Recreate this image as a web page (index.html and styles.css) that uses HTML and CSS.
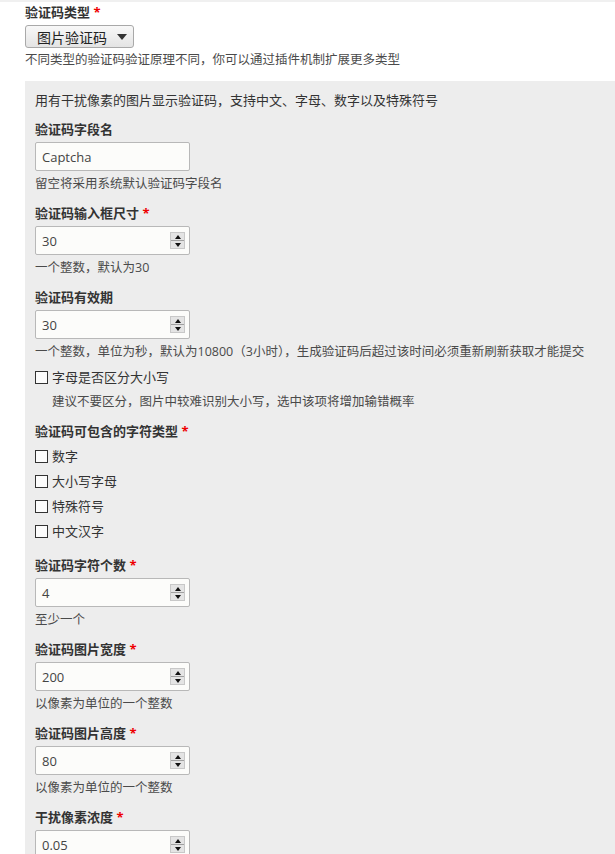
FILE: index.html
```html
<!DOCTYPE html>
<html lang="zh-CN">
<head>
  <meta charset="UTF-8">
  <meta name="viewport" content="width=device-width, initial-scale=1">
  <title>验证码设置</title>
  <link rel="stylesheet" href="styles.css">
</head>
<body>

<div class="page">
  <!-- Captcha type -->
  <div class="top-field">
    <label class="field-label">验证码类型 <span class="req">*</span></label>
    <div class="select">图片验证码<span class="caret"></span></div>
    <div class="help">不同类型的验证码验证原理不同，你可以通过插件机制扩展更多类型</div>
  </div>

  <!-- Image captcha settings -->
  <div class="panel">
    <p class="intro">用有干扰像素的图片显示验证码，支持中文、字母、数字以及特殊符号</p>

    <div class="field">
      <label class="field-label">验证码字段名</label>
      <div class="input"><span class="value">Captcha</span></div>
      <div class="help">留空将采用系统默认验证码字段名</div>
    </div>

    <div class="field">
      <label class="field-label">验证码输入框尺寸 <span class="req">*</span></label>
      <div class="input"><span class="value">30</span><span class="spin"><i class="up"></i><i class="down"></i></span></div>
      <div class="help">一个整数，默认为30</div>
    </div>

    <div class="field">
      <label class="field-label">验证码有效期</label>
      <div class="input"><span class="value">30</span><span class="spin"><i class="up"></i><i class="down"></i></span></div>
      <div class="help">一个整数，单位为秒，默认为10800（3小时），生成验证码后超过该时间必须重新刷新获取才能提交</div>
    </div>

    <div class="check-single">
      <label class="option"><span class="box"></span>字母是否区分大小写</label>
      <div class="help indent">建议不要区分，图片中较难识别大小写，选中该项将增加输错概率</div>
    </div>

    <div class="field">
      <label class="field-label">验证码可包含的字符类型 <span class="req">*</span></label>
      <div class="options">
        <label class="option"><span class="box"></span>数字</label>
        <label class="option"><span class="box"></span>大小写字母</label>
        <label class="option"><span class="box"></span>特殊符号</label>
        <label class="option"><span class="box"></span>中文汉字</label>
      </div>
    </div>

    <div class="field after-group">
      <label class="field-label">验证码字符个数 <span class="req">*</span></label>
      <div class="input"><span class="value">4</span><span class="spin"><i class="up"></i><i class="down"></i></span></div>
      <div class="help">至少一个</div>
    </div>

    <div class="field">
      <label class="field-label">验证码图片宽度 <span class="req">*</span></label>
      <div class="input"><span class="value">200</span><span class="spin"><i class="up"></i><i class="down"></i></span></div>
      <div class="help">以像素为单位的一个整数</div>
    </div>

    <div class="field">
      <label class="field-label">验证码图片高度 <span class="req">*</span></label>
      <div class="input"><span class="value">80</span><span class="spin"><i class="up"></i><i class="down"></i></span></div>
      <div class="help">以像素为单位的一个整数</div>
    </div>

    <div class="field">
      <label class="field-label">干扰像素浓度 <span class="req">*</span></label>
      <div class="input"><span class="value">0.05</span><span class="spin"><i class="up"></i><i class="down"></i></span></div>
    </div>
  </div>
</div>

</body>
</html>
```

FILE: styles.css
```css
body {
  margin: 0;
  border-top: 2px solid #f0f0f0;
  background-color: #fff;
  font-family: "Open Sans", "Noto Sans CJK SC", sans-serif;
  font-size: 13px;
  color: #333;
}

.page {
  padding: 1px 0 0 25px;
}

.field-label {
  display: block;
  font-weight: bold;
  line-height: 18px;
  margin-bottom: 4px;
  color: #333;
}

.req {
  color: #e00;
}

.help {
  line-height: 18px;
  margin-top: 4px;
  color: #4a4a4a;
  font-size: 12.5px;
}

/* select */
.select {
  display: flex;
  align-items: center;
  justify-content: space-between;
  box-sizing: border-box;
  width: 109px;
  height: 23px;
  padding: 0 6px 0 11px;
  border: 1px solid #a9a9a9;
  border-radius: 3px;
  background: linear-gradient(#f8f8f8, #e4e4e4);
  font-size: 14px;
  color: #222;
}

.caret {
  width: 0;
  height: 0;
  border-left: 5px solid transparent;
  border-right: 5px solid transparent;
  border-top: 6px solid #333;
}

.top-field .help {
  margin-top: 3px;
}

/* gray panel */
.panel {
  margin-top: 12px;
  padding: 10px 10px 20px;
  background-color: #ededed;
}

.intro {
  margin: 0;
  line-height: 18px;
}

.field {
  margin-top: 11px;
}

.field.after-group {
  margin-top: 16px;
}

/* inputs */
.input {
  display: flex;
  align-items: center;
  justify-content: space-between;
  box-sizing: border-box;
  width: 155px;
  height: 29px;
  padding: 0 4px 0 6px;
  border: 1px solid #b8b8b8;
  border-radius: 2px;
  background-color: #fcfcfa;
  color: #444;
}

.spin {
  display: flex;
  flex-direction: column;
  width: 15px;
  height: 17px;
  box-sizing: border-box;
  border: 1px solid #c8c8c8;
  background-color: #e4e4e4;
}

.spin i {
  flex: 1;
  display: flex;
  align-items: center;
  justify-content: center;
}

.spin .down {
  border-top: 1px solid #a0a0a0;
}

.spin .up::before,
.spin .down::before {
  content: "";
  width: 0;
  height: 0;
  border-left: 3.5px solid transparent;
  border-right: 3.5px solid transparent;
}

.spin .up::before {
  border-bottom: 4px solid #111;
}

.spin .down::before {
  border-top: 4px solid #111;
}

/* checkboxes */
.check-single {
  margin-top: 7px;
}

.check-single .help {
  margin-top: 7px;
}

.indent {
  padding-left: 17px;
}

.option {
  display: flex;
  align-items: center;
  line-height: 18px;
  color: #333;
}

.options .option {
  margin-top: 7px;
}

.box {
  width: 13px;
  height: 13px;
  box-sizing: border-box;
  margin-right: 4px;
  border: 1px solid #333;
  background-color: #fcfcfc;
}
```
